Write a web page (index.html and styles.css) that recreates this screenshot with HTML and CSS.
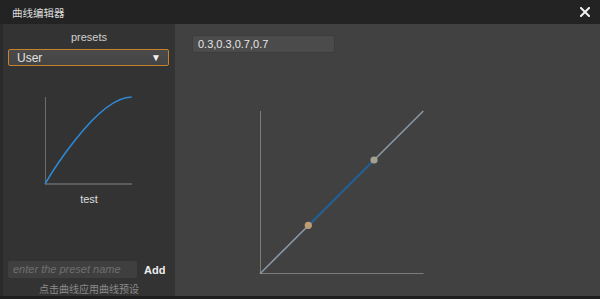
FILE: index.html
```html
<!DOCTYPE html>
<html>
<head>
<meta charset="utf-8">
<link rel="stylesheet" href="styles.css">
</head>
<body>
<div class="window">
  <div class="titlebar">
    <span class="title">曲线编辑器</span>
    <svg class="close" width="10" height="10" viewBox="0 0 10 10"><path d="M1 1 L9 9 M9 1 L1 9" stroke="#f0f0f0" stroke-width="2" stroke-linecap="square"/></svg>
  </div>
  <div class="main">
    <div class="strip"></div>
    <div class="side">
      <div class="side-title">presets</div>
      <div class="select"><span>User</span><span class="arrow">▼</span></div>
      <svg class="thumb" width="100" height="100" viewBox="0 0 100 100">
        <line x1="5.5" y1="7" x2="5.5" y2="94" stroke="#6b6b6b" stroke-width="1"/>
        <line x1="5" y1="94" x2="92" y2="94" stroke="#5c5c5c" stroke-width="2"/>
        <path d="M5 94 C5 94 55.5 7 91.7 7" fill="none" stroke="#2f87d2" stroke-width="1.6"/>
      </svg>
      <div class="thumb-label">test</div>
      <div class="spacer"></div>
      <div class="add-row">
        <div class="name-input">enter the preset name</div>
        <div class="add">Add</div>
      </div>
      <div class="hint">点击曲线应用曲线预设</div>
    </div>
    <div class="canvas">
      <div class="bez-input">0.3,0.3,0.7,0.7</div>
      <svg class="editor" width="175" height="175" viewBox="0 0 175 175">
        <line x1="5.5" y1="6" x2="5.5" y2="169" stroke="#7c7c7c" stroke-width="1"/>
        <line x1="5" y1="168.5" x2="168.5" y2="168.5" stroke="#7c7c7c" stroke-width="1.2"/>
        <line x1="5" y1="168.7" x2="168.3" y2="6" stroke="#8998a6" stroke-width="1.6"/>
        <line x1="53.3" y1="120.3" x2="119" y2="55" stroke="#1f5b8f" stroke-width="2.2"/>
        <circle cx="53.3" cy="120.3" r="3.6" fill="#c09c74"/>
        <circle cx="119" cy="55" r="3.6" fill="#a3a18f"/>
      </svg>
    </div>
  </div>
</div>
</body>
</html>
```
FILE: styles.css
```css
html, body {
  margin: 0;
  padding: 0;
  background: #222;
}
body {
  font-family: "Liberation Sans", Arial, "Noto Sans CJK SC", sans-serif;
  width: 600px;
  height: 299px;
  overflow: hidden;
}
.window {
  width: 600px;
  height: 299px;
  display: flex;
  flex-direction: column;
  background: #1e1e1e;
}
.titlebar {
  height: 24px;
  flex: none;
  background: #232323;
  display: flex;
  align-items: center;
  justify-content: space-between;
  padding: 0 10px 0 12px;
}
.title {
  color: #dcdcdc;
  font-size: 10.5px;
  font-family: "Noto Sans CJK SC", sans-serif;
}
.close {
  display: block;
}
.main {
  height: 272px;
  flex: none;
  display: flex;
}
.strip {
  width: 3px;
  background: #2a2a2a;
}
.side {
  width: 172px;
  background: #333333;
  display: flex;
  flex-direction: column;
  align-items: stretch;
}
.side-title {
  text-align: center;
  color: #cfcfcf;
  font-size: 11px;
  margin-top: 7px;
  height: 13px;
  line-height: 13px;
}
.select {
  margin: 5px 6px 0 5px;
  height: 15px;
  border: 1px solid #c7812f;
  border-radius: 2px;
  background: linear-gradient(#4a4a4a, #444);
  display: flex;
  align-items: center;
  justify-content: space-between;
  padding: 0 7px 0 8px;
  color: #e2e2e2;
  font-size: 12px;
}
.arrow {
  font-size: 10px;
  color: #f0f0f0;
}
.thumb {
  display: block;
  margin: 24px 0 0 37px;
}
.thumb-label {
  text-align: center;
  color: #dedede;
  font-size: 11px;
  margin-top: 3px;
  height: 13px;
  line-height: 13px;
}
.spacer {
  flex: 1;
}
.add-row {
  display: flex;
  align-items: center;
  margin-left: 5px;
  height: 17px;
}
.name-input {
  width: 124px;
  height: 17px;
  line-height: 17px;
  background: #3f3f3f;
  border-radius: 2px;
  color: #6f6f6f;
  font-style: italic;
  font-size: 11px;
  padding-left: 5px;
}
.add {
  margin-left: 7px;
  color: #eeeeee;
  font-weight: bold;
  font-size: 11px;
}
.hint {
  text-align: center;
  color: #8c8c8c;
  font-size: 10px;
  font-family: "Noto Sans CJK SC", sans-serif;
  margin-top: 4px;
  height: 14px;
  line-height: 14px;
}
.canvas {
  flex: 1;
  background: #414141;
  padding: 11px 0 0 17px;
  display: flex;
  flex-direction: column;
  align-items: flex-start;
}
.bez-input {
  width: 136px;
  height: 16px;
  line-height: 16px;
  background: #4b4b4b;
  border: 1px solid #3c3c3c;
  border-radius: 2px;
  padding-left: 5px;
  color: #e6e6e6;
  font-size: 11px;
}
.editor {
  display: block;
  margin: 52px 0 0 63px;
}
```
